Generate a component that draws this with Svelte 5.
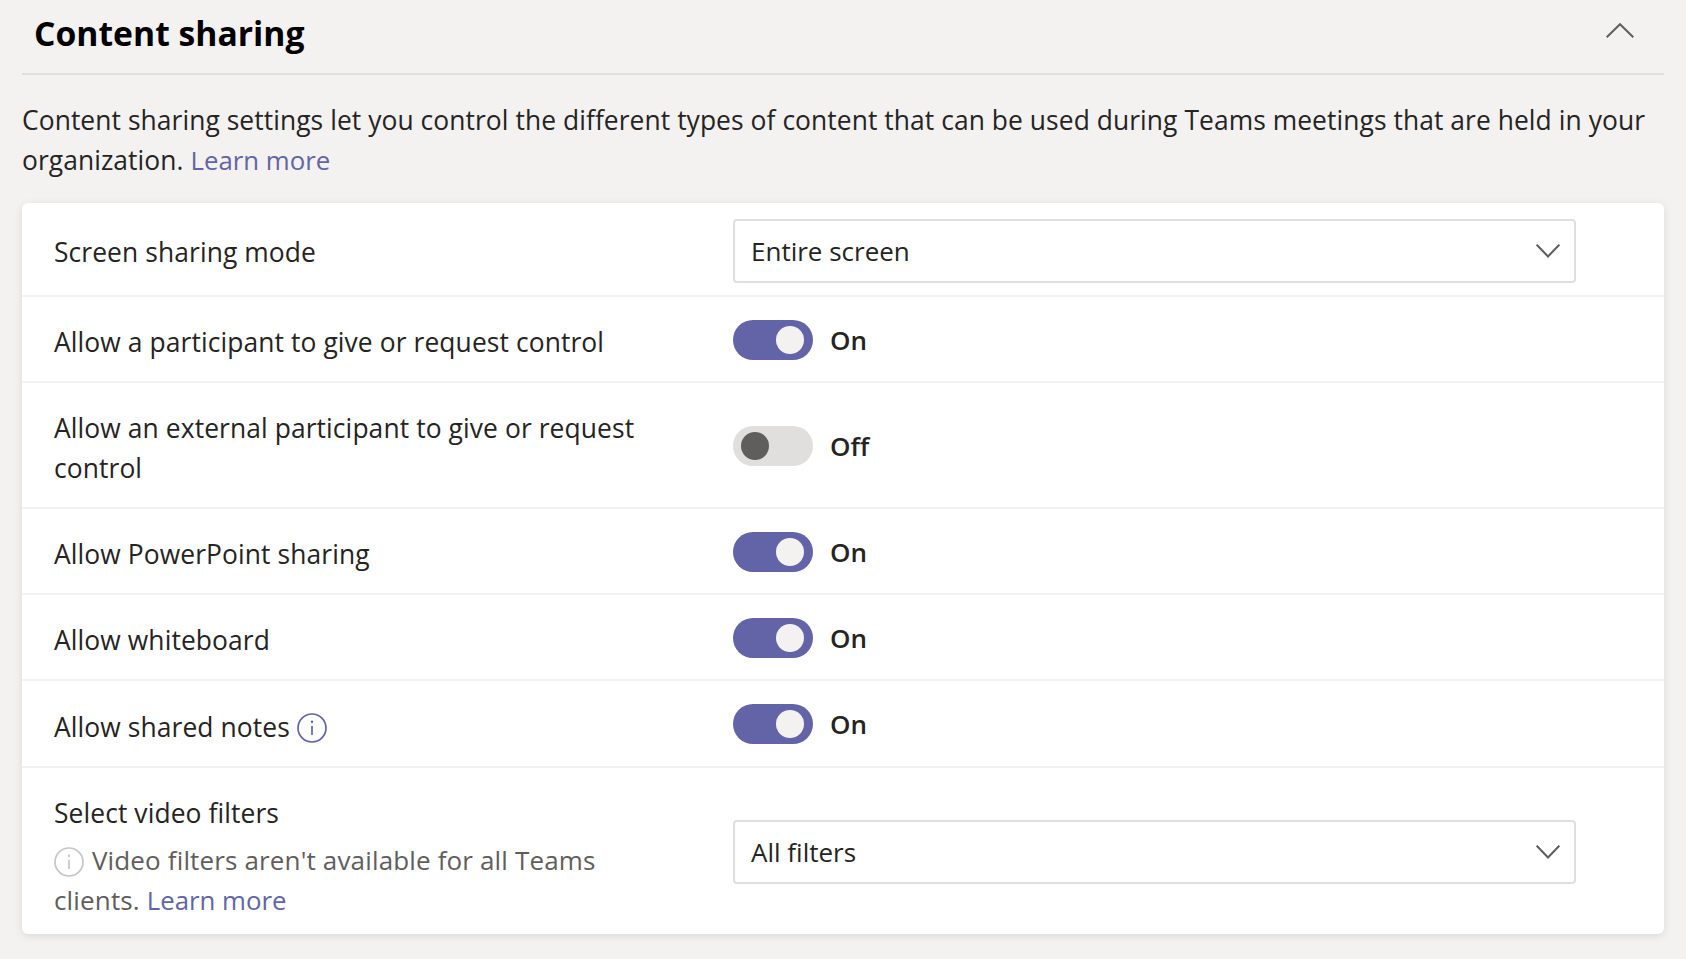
<script>
  const rows = [
    { kind: 'select', label: 'Screen sharing mode', value: 'Entire screen', height: 92 },
    { kind: 'toggle', label: 'Allow a participant to give or request control', on: true, height: 84 },
    { kind: 'toggle', label: 'Allow an external participant to give or request control', on: false, height: 124, tall: true },
    { kind: 'toggle', label: 'Allow PowerPoint sharing', on: true, height: 84 },
    { kind: 'toggle', label: 'Allow whiteboard', on: true, height: 84 },
    { kind: 'toggle', label: 'Allow shared notes', on: true, info: true, height: 85 }
  ];
</script>

{#snippet infoIcon(cls)}
  <svg class={cls} viewBox="0 0 30 30" fill="none" stroke="currentColor" stroke-width="1.7">
    <circle cx="15" cy="15" r="14" />
    <line x1="15" y1="13" x2="15" y2="22" />
    <circle cx="15" cy="8.8" r="1.2" fill="currentColor" stroke="none" />
  </svg>
{/snippet}

{#snippet chevronDown()}
  <svg class="chevron" viewBox="0 0 24 14" fill="none" stroke="currentColor" stroke-width="2">
    <polyline points="0.7,0.7 12,12.5 23.3,0.7" />
  </svg>
{/snippet}

{#snippet select(value)}
  <div class="select">
    <span>{value}</span>
    {@render chevronDown()}
  </div>
{/snippet}

<div class="page">
  <header class="section-head">
    <h2>Content sharing</h2>
    <svg class="collapse" viewBox="0 0 28 15" fill="none" stroke="currentColor" stroke-width="2">
      <polyline points="0.7,14.3 14,1.2 27.3,14.3" />
    </svg>
  </header>

  <p class="intro">
    Content sharing settings let you control the different types of content that can be used during Teams meetings that are held in your organization. <a href="#more">Learn more</a>
  </p>

  <section class="card">
    {#each rows as row}
      <div class="row" class:has-info={row.info} style="height: {row.height}px">
        <div class="label" class:tall={row.tall}>
          {row.label}
          {#if row.info}
            {@render infoIcon('info')}
          {/if}
        </div>
        <div class="control">
          {#if row.kind === 'select'}
            {@render select(row.value)}
          {:else}
            <span class="toggle" class:on={row.on}><span class="knob"></span></span>
            <span class="state">{row.on ? 'On' : 'Off'}</span>
          {/if}
        </div>
      </div>
    {/each}

    <div class="row last">
      <div class="label">
        <div>Select video filters</div>
        <div class="note">
          {@render infoIcon('info muted')}
          Video filters aren't available for all Teams clients. <a href="#more">Learn more</a>
        </div>
      </div>
      <div class="control">
        {@render select('All filters')}
      </div>
    </div>
  </section>
</div>

<style>
  :global(body) {
    background: #f3f2f1;
  }

  .page {
    box-sizing: border-box;
    height: 959px;
    padding: 0 22px;
    background: #f3f2f1;
    color: #252423;
    font-family: "Open Sans", "Noto Sans", sans-serif;
    font-size: 26.4px;
    line-height: 40px;
    overflow: hidden;
  }

  .section-head {
    display: flex;
    align-items: flex-start;
    justify-content: space-between;
    box-sizing: border-box;
    height: 75px;
    padding: 0 30px 0 12px;
    border-bottom: 2px solid #e1dfdd;
  }

  h2 {
    margin: 10px 0 0;
    font-size: 33.7px;
    font-weight: 700;
    line-height: 46px;
    color: #000;
  }

  .collapse {
    width: 28px;
    height: 15px;
    margin-top: 23px;
    color: #605e5c;
  }

  .intro {
    margin: 25px 0 23px;
    letter-spacing: 0.07px;
  }

  a {
    color: #6264a7;
    font-size: 25.8px;
    letter-spacing: 0;
    text-decoration: none;
  }

  .card {
    background: #fff;
    border-radius: 6px;
    box-shadow: 0 2px 8px rgba(0, 0, 0, 0.1);
  }

  .row {
    display: flex;
    align-items: center;
    padding-left: 32px;
    border-bottom: 2px solid #f3f2f1;
  }

  .row.last {
    height: 166px;
    border-bottom: 0;
  }

  .label {
    flex: none;
    width: 647px;
    padding-top: 6px;
    letter-spacing: 0.1px;
  }

  .label.tall {
    padding-top: 6px;
  }

  .row.last .label {
    padding-top: 10px;
  }

  .note {
    max-width: 600px;
    margin-top: 7px;
    color: #605e5c;
    font-size: 26px;
    letter-spacing: 0.15px;
  }

  .info {
    width: 30px;
    height: 30px;
    margin-left: 0;
    vertical-align: -6px;
    color: #6264a7;
  }

  .info.muted {
    margin-right: 1px;
    vertical-align: -7px;
    color: #c8c6c4;
  }

  .control {
    display: flex;
    align-items: center;
    margin-left: 32px;
    padding-top: 2px;
  }

  .row.has-info .control {
    padding-top: 0;
  }

  .row.last .control {
    padding-top: 0;
  }

  .select {
    display: flex;
    align-items: center;
    justify-content: space-between;
    box-sizing: border-box;
    width: 843px;
    height: 64px;
    margin-top: 2px;
    padding: 0 14px 0 16px;
    border: 2px solid #e1dfdd;
    border-radius: 4px;
    font-size: 26px;
  }

  .chevron {
    width: 24px;
    height: 14px;
    color: #605e5c;
  }

  .toggle {
    display: flex;
    align-items: center;
    box-sizing: border-box;
    width: 80px;
    height: 40px;
    padding: 0 8px;
    border-radius: 20px;
    background: #e1dfdd;
  }

  .toggle.on {
    justify-content: flex-end;
    padding-right: 9px;
    background: #6264a7;
  }

  .knob {
    width: 28px;
    height: 28px;
    border-radius: 50%;
    background: #605e5c;
  }

  .toggle.on .knob {
    background: #f3f2f1;
  }

  .state {
    margin-left: 17px;
    font-size: 26px;
    font-weight: 600;
  }
</style>
